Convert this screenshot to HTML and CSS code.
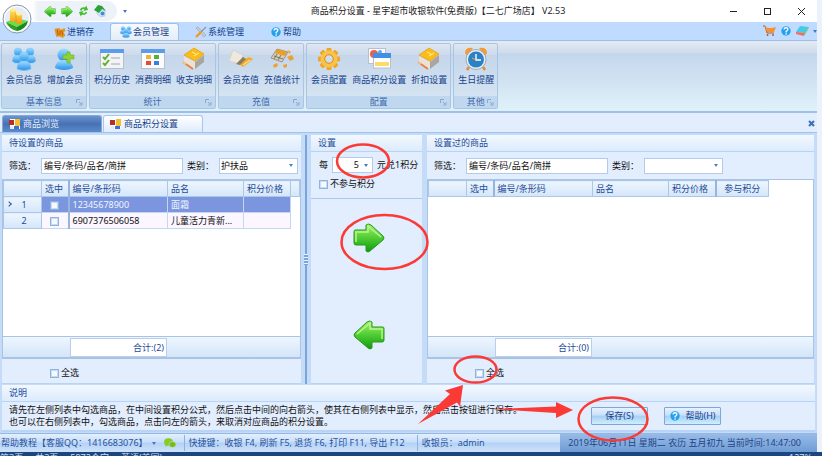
FILE: index.html
```html
<!DOCTYPE html>
<html lang="zh-CN">
<head>
    <meta charset="UTF-8">
    <meta name="viewport" content="width=device-width, initial-scale=1.0">
    <title>商品积分设置 - 星宇超市收银软件</title>
    <link rel="stylesheet" href="styles.css">
</head>
<body>
    <!-- shared icons -->
    <svg class="defs" width="0" height="0" aria-hidden="true">
        <defs>
            <linearGradient id="green" x1="0" y1="0" x2="0" y2="1"><stop offset="0" stop-color="#a5ef6e"/><stop offset="0.5" stop-color="#4fcc33"/><stop offset="1" stop-color="#109a10"/></linearGradient>
            <linearGradient id="blue" x1="0" y1="0" x2="0" y2="1"><stop offset="0" stop-color="#9fe0ff"/><stop offset="1" stop-color="#2b8fe8"/></linearGradient>
            <linearGradient id="gold" x1="0" y1="0" x2="0" y2="1"><stop offset="0" stop-color="#ffdf5c"/><stop offset="1" stop-color="#f09a10"/></linearGradient>
            <symbol id="arrow" viewBox="0 0 32 30">
                <path d="M2 7 Q1 7 1 9 V20 Q1 22 3 22 H13 V28 Q15 30 17 28 L30 17 Q32 15 30 13 L18 2 Q15 0 13 2 V7 Z" fill="url(#green)" stroke="#279a1b" stroke-width="1"/>
                <path d="M3 19 V9 H15 V3 L28 14" fill="none" stroke="#b9f58c" stroke-width="1.5"/>
            </symbol>
            <symbol id="people" viewBox="0 0 24 24">
                <g fill="url(#blue)" stroke="#7cc6fa" stroke-width="0.6">
                    <circle cx="6" cy="5" r="4"/><circle cx="18" cy="5" r="4"/>
                    <path d="M0 14 Q1 8 6 8 L10 16 H3 Z M24 14 Q23 8 18 8 L14 16 H21 Z"/>
                    <circle cx="12" cy="10" r="5"/><path d="M5 22 Q5 14 12 14 Q19 14 19 22 Q12 25 5 22 Z"/>
                </g>
            </symbol>
            <symbol id="help" viewBox="0 0 16 16">
                <circle cx="8" cy="8" r="7.5" fill="#b9e4fb"/><circle cx="8" cy="8" r="6.3" fill="#26a0ee"/>
                <path d="M5.4 6 Q5.6 3.6 8 3.6 Q10.6 3.7 10.5 6 Q10.3 7.4 8.2 8.6 V10" fill="none" stroke="#fff" stroke-width="1.8"/>
                <circle cx="8.2" cy="12" r="1.1" fill="#fff"/>
            </symbol>
            <symbol id="box" viewBox="0 0 24 24">
                <path d="M2 9 L13 15 V22 L2 16 Z" fill="#e9e3d7"/><path d="M13 15 L22 8 V15 L13 22 Z" fill="#a9a69e"/>
                <path d="M2 8 L12 1 L22 7 L13 14 Z" fill="#fbbd18" stroke="#e69a12" stroke-width="0.7"/>
                <path d="M10 5 L14 7 M12 9 L17 6" stroke="#fff0a0" stroke-width="1"/>
                <path d="M1 15 L11 22" stroke="#ef7b31" stroke-width="1.6"/><path d="M1 15 L4 17" stroke="#f7c39c" stroke-width="1.6"/>
            </symbol>
            <symbol id="form" viewBox="0 0 12 12">
                <rect x="1" y="1" width="10" height="10" fill="#fff"/>
                <path d="M0 2 H5 V7 H0 Z" fill="#b2321f"/><path d="M6 1 H11 V8 H6 Z" fill="#f6bd31"/><path d="M5 8 H10 V11 H5 Z" fill="#3a70dc"/><path d="M1 8 H4 V11 H1 Z" fill="#e4e8f3"/>
            </symbol>
            <symbol id="launch" viewBox="0 0 7 7">
                <path d="M0.5 4 V0.5 H4 M3 3 L5 5 M6 3.2 V6 H3.2" fill="none" stroke="#8ba6cf" stroke-width="1"/>
            </symbol>
        </defs>
    </svg>

    <div class="screen">
        <div class="window">
            <header class="titlebar">
                <nav class="quick" aria-label="快速访问">
                    <button aria-label="后退"><svg class="flip" width="12" height="11"><use href="#arrow"/></svg></button>
                    <button aria-label="前进"><svg width="12" height="11"><use href="#arrow"/></svg></button>
                    <button aria-label="刷新"><svg width="11" height="12" viewBox="0 0 12 12"><path d="M2 5 Q3 1 8 2 L9 0 L11 5 L6 6 L7 4 Q4 3 4 6 Z M10 7 Q9 11 4 10 L3 12 L1 7 L6 6 L5 8 Q8 9 8 7 Z" fill="#46bd31"/></svg></button>
                    <button aria-label="主页"><svg width="12" height="12" viewBox="0 0 12 12"><path d="M3 5 H11 V11 L7 12 L3 9 Z" fill="#d9e5f4" stroke="#9cb2cf" stroke-width="0.5"/><path d="M0 5 L4 0 L8 1 L12 6 L8 4 L5 8 Z" fill="#27a337"/><circle cx="8.5" cy="8.5" r="2" fill="#3e8edb"/></svg></button>
                </nav>
                <span class="quick-more caret"></span>
                <h1>商品积分设置 - 星宇超市收银软件(免费版)【二七广场店】 V2.53</h1>
                <div class="win-buttons">
                    <button aria-label="最小化"><svg width="9" height="9"><path d="M1 4.5 H8" stroke="#222"/></svg></button>
                    <button aria-label="最大化"><svg width="9" height="9"><rect x="1.5" y="1.5" width="6" height="6" fill="none" stroke="#222"/></svg></button>
                    <button aria-label="关闭"><svg width="9" height="9"><path d="M1 1 L8 8 M8 1 L1 8" stroke="#222"/></svg></button>
                </div>
            </header>
            <button class="orb" aria-label="主菜单">
                <svg width="30" height="30" viewBox="0 0 30 30">
                    <circle cx="15" cy="15" r="14" fill="#e6edf5" stroke="#8998ad" stroke-width="1"/>
                    <circle cx="15" cy="15" r="12.5" fill="none" stroke="#fff" stroke-width="1.2"/>
                    <path d="M4 18 L14 14 L26 17 L15 23 Z" fill="#6bdc4a"/><path d="M4 18 L15 23 V27 Q7 25 4 18 Z" fill="#2fa024"/><path d="M26 17 L15 23 V27 Q24 25 26 17 Z" fill="#1c8a19"/>
                    <path d="M8 6 V17 Q11 19 14 17 V6 Z M14 10 V19 Q17 21 20 19 V10 Z" fill="url(#gold)"/>
                    <path d="M14 9 V18" stroke="#d98c10" stroke-width="0.6"/>
                    <ellipse cx="11" cy="6" rx="3" ry="1.6" fill="#fff08d"/><ellipse cx="17" cy="10" rx="3" ry="1.6" fill="#fff08d"/>
                </svg>
            </button>

            <nav class="menubar">
                <a href="#" class="menu"><svg width="12" height="11" viewBox="0 0 12 12"><path d="M0 2 L5 1 L7 3 L11 1 L12 4 L10 6 L12 9 L9 12 L5 10 L2 11 L1 7 Z" fill="#eb941b"/><path d="M3 3 L4 9 M6 4 V9 M8 4 L9 9" stroke="#a65a10" stroke-width="1"/></svg>进销存</a>
                <a href="#" class="menu current"><svg width="12" height="12"><use href="#people"/></svg>会员管理</a>
                <a href="#" class="menu"><svg width="12" height="12" viewBox="0 0 12 12"><path d="M1 2 Q3 0 4 2 L11 9 L9 11 L3 4 Z" fill="#c8cdd4" stroke="#8991a0" stroke-width="0.5"/><path d="M11 1 L6 6" stroke="#9098a4" stroke-width="1.2"/><path d="M6 6 L1 11" stroke="#f09a22" stroke-width="2.4"/></svg>系统管理</a>
                <a href="#" class="menu"><svg width="12" height="12"><use href="#help"/></svg>帮助</a>
                <div class="menu-tools">
                    <button aria-label="购物车"><svg width="13" height="12" viewBox="0 0 13 12"><path d="M0 1 H2 L4 8 H11" fill="none" stroke="#c55416"/><path d="M2 2 Q7 4 13 2 L11 7 H4 Z" fill="#f39234"/><circle cx="4.5" cy="10" r="1" fill="#a5683a"/><circle cx="10" cy="10" r="1" fill="#a5683a"/></svg></button>
                    <button aria-label="帮助"><svg width="12" height="12"><use href="#help"/></svg></button>
                    <button aria-label="皮肤"><svg width="13" height="12" viewBox="0 0 13 12"><path d="M4 1 L13 2 L9 8 L0 7 Z" fill="#43cbe8"/><path d="M0 7 L9 8 L8 11 L0 9 Z" fill="#ef6d59"/><path d="M13 2 L12 5 L8 11 L9 8 Z" fill="#8fc963"/></svg></button>
                    <span class="caret"></span>
                </div>
            </nav>

            <div class="ribbon">
                <section class="group">
                    <div class="items">
                        <button><svg width="24" height="24"><use href="#people"/></svg>会员信息</button>
                        <button><svg width="24" height="24" viewBox="0 0 24 24"><circle cx="11" cy="8" r="6.5" fill="url(#blue)"/><path d="M2 21 Q3 13 11 13 Q19 13 20 21 Q11 25 2 21 Z" fill="url(#blue)"/><path d="M14 5 H17 V8 H21 V12 H17 V16 H14 V12 H10 V8 H14 Z" fill="#91d32b" stroke="#5fa81c" stroke-width="0.5"/></svg>增加会员</button>
                    </div>
                    <footer>基本信息<svg width="7" height="7"><use href="#launch"/></svg></footer>
                </section>
                <section class="group">
                    <div class="items">
                        <button><svg width="24" height="24" viewBox="0 0 24 24"><rect x="0.5" y="2.5" width="23" height="19" fill="#f3f4f6" stroke="#b6c0cd"/><rect x="0" y="2" width="24" height="4" fill="#5c9cec"/><path d="M3 10 L5 12 L9 7 M3 16 L5 18 L9 13" fill="none" stroke="#65ae2a" stroke-width="2"/><path d="M11 11 H20 M11 17 H20" stroke="#bcc1c8" stroke-width="1.5"/></svg>积分历史</button>
                        <button><svg width="24" height="24" viewBox="0 0 24 24"><rect x="0.5" y="2.5" width="23" height="19" fill="#fcfcfd" stroke="#b6c0cd"/><rect x="0" y="2" width="24" height="4" fill="#5c9cec"/><rect x="5" y="8" width="5" height="4" fill="#f0b23b"/><rect x="13" y="8" width="5" height="4" fill="#5caf35"/><rect x="5" y="14" width="5" height="4" fill="#e84a34"/><rect x="13" y="14" width="5" height="4" fill="#397ee0"/></svg>消费明细</button>
                        <button><svg width="24" height="24"><use href="#box"/></svg>收支明细</button>
                    </div>
                    <footer>统计<svg width="7" height="7"><use href="#launch"/></svg></footer>
                </section>
                <section class="group">
                    <div class="items">
                        <button><svg width="24" height="24" viewBox="0 0 24 24"><path d="M4 3 L14 8 L11 17 L0 14 Z" fill="#eee9df" stroke="#ccc7bd" stroke-width="0.6"/><path d="M9 16 L20 10 L24 12 L14 20 Z" fill="#f2ae23"/><path d="M7 17 L14 10 L17 12 L11 18 Z" fill="#8f7b60"/><path d="M14 18 L21 13" stroke="#fff0b0"/></svg>会员充值</button>
                        <button><svg width="24" height="24" viewBox="0 0 24 24"><path d="M7 2 L18 5 L12 15 L1 11 Z" fill="#d4ccbc" stroke="#96856b" stroke-width="0.8"/><path d="M7 2 L17 5 L15 9 L5 6 Z" fill="#e99e24"/><path d="M4 9 L13 12 M7 7 L4 12 M11 8 L8 13" stroke="#6f604c" stroke-width="0.8"/><path d="M17 10 L22 8 L24 12 L20 14 Z M3 18 L7 16 L8 19 L4 21 Z M13 18 L17 17 V20 L14 21 Z M18 3 L21 5 L19 7 Z" fill="#eda32b"/></svg>充值统计</button>
                    </div>
                    <footer>充值<svg width="7" height="7"><use href="#launch"/></svg></footer>
                </section>
                <section class="group">
                    <div class="items">
                        <button><svg width="24" height="24" viewBox="0 0 24 24"><g fill="#efa527"><rect x="9.5" y="1" width="5" height="22" rx="1"/><rect x="9.5" y="1" width="5" height="22" rx="1" transform="rotate(45 12 12)"/><rect x="9.5" y="1" width="5" height="22" rx="1" transform="rotate(90 12 12)"/><rect x="9.5" y="1" width="5" height="22" rx="1" transform="rotate(135 12 12)"/></g><circle cx="12" cy="12" r="8.5" fill="#fac345"/><circle cx="12" cy="12" r="4.3" fill="#cfdced" stroke="#d68d1d"/></svg>会员配置</button>
                        <button><svg width="24" height="24" viewBox="0 0 24 24"><rect x="1.5" y="1.5" width="17" height="15" fill="#fbfbfc" stroke="#b9c0cc"/><circle cx="7" cy="7" r="4" fill="#ec5f4a"/><circle cx="13" cy="5" r="2" fill="#66a7ec"/><rect x="6.5" y="7" width="17" height="14" fill="#fff" stroke="#b9c0cc"/><rect x="6" y="6" width="18" height="5" fill="#3f91e5"/><rect x="8" y="15" width="14" height="4" fill="#fbdc68"/></svg>商品积分设置</button>
                        <button><svg width="24" height="24"><use href="#box"/></svg>折扣设置</button>
                    </div>
                    <footer>配置<svg width="7" height="7"><use href="#launch"/></svg></footer>
                </section>
                <section class="group">
                    <div class="items">
                        <button><svg width="24" height="24" viewBox="0 0 24 24"><path d="M1 6 Q1 0 9 1 L3 9 Z M23 6 Q23 0 15 1 L21 9 Z" fill="#f49b35"/><path d="M5 20 L3 23 M19 20 L21 23" stroke="#e58c2a" stroke-width="2.5"/><circle cx="12" cy="12.5" r="10" fill="#e6eef4" stroke="#8b9dad" stroke-width="0.8"/><circle cx="12" cy="12.5" r="8" fill="#2b81c6"/><path d="M12 7 V13 H17" fill="none" stroke="#fff" stroke-width="1.4"/><path d="M12 13 L8 11" stroke="#f5ad47"/></svg>生日提醒</button>
                    </div>
                    <footer>其他<svg width="7" height="7"><use href="#launch"/></svg></footer>
                </section>
            </div>

            <nav class="doc-tabs">
                <a href="#" class="doc-tab"><svg width="12" height="12"><use href="#form"/></svg>商品浏览</a>
                <a href="#" class="doc-tab current"><svg width="12" height="12"><use href="#form"/></svg>商品积分设置</a>
                <button class="doc-close" aria-label="关闭"><svg width="7" height="7"><path d="M1 1 L6 6 M6 1 L1 6" stroke="#3b6fb8" stroke-width="2"/></svg></button>
            </nav>

            <main class="workspace">
                <section class="panel">
                    <h2>待设置的商品</h2>
                    <div class="filter">
                        <label for="filterLeft">筛选：</label>
                        <input type="text" id="filterLeft" value="编号/条码/品名/简拼">
                        <label for="typeLeft">类别：</label>
                        <select id="typeLeft"><option>护扶品</option></select>
                    </div>
                    <div class="grid-box">
                        <div class="grid-body">
                            <table>
                                <colgroup><col class="c-head"><col class="c-check"><col class="c-code"><col class="c-name"><col class="c-price"><col></colgroup>
                                <thead>
                                    <tr><th></th><th class="fixed">选中</th><th>编号/条形码</th><th>品名</th><th>积分价格</th><th></th></tr>
                                </thead>
                                <tbody>
                                    <tr class="selected"><th><span class="marker"></span>1</th><td class="check"><input type="checkbox" aria-label="选中 1"></td><td>12345678900</td><td>面霜</td><td></td><td class="rest"></td></tr>
                                    <tr><th>2</th><td class="check"><input type="checkbox" aria-label="选中 2"></td><td>6907376506058</td><td>儿童活力青新...</td><td></td><td class="rest"></td></tr>
                                </tbody>
                            </table>
                        </div>
                        <div class="grid-foot"><output>合计:(2)</output></div>
                    </div>
                    <div class="select-all"><label><input type="checkbox">全选</label></div>
                </section>
                <div class="splitter"><span></span></div>
                <section class="panel middle">
                    <h2>设置</h2>
                    <div class="formula">
                        <div class="formula-row">
                            <label for="yuan">每</label>
                            <span class="combo"><input type="text" id="yuan" value="5"><i class="caret"></i></span>
                            <span>元兑1积分</span>
                        </div>
                        <label><input type="checkbox">不参与积分</label>
                    </div>
                    <div class="moves">
                        <button aria-label="添加"><svg width="32" height="30"><use href="#arrow"/></svg></button>
                        <button aria-label="移除"><svg class="flip" width="32" height="30"><use href="#arrow"/></svg></button>
                    </div>
                </section>
                <section class="panel">
                    <h2>设置过的商品</h2>
                    <div class="filter">
                        <label for="filterRight">筛选：</label>
                        <input type="text" id="filterRight" value="编号/条码/品名/简拼">
                        <label for="typeRight">类别：</label>
                        <select id="typeRight"><option></option></select>
                    </div>
                    <div class="grid-box">
                        <div class="grid-body">
                            <table>
                                <colgroup><col class="c-head"><col class="c-check"><col class="c-code"><col class="c-name"><col class="c-price"><col class="c-join"><col></colgroup>
                                <thead>
                                    <tr><th></th><th class="fixed">选中</th><th>编号/条形码</th><th>品名</th><th class="fixed">积分价格</th><th class="center">参与积分</th><td class="rest"></td></tr>
                                </thead>
                            </table>
                        </div>
                        <div class="grid-foot"><output>合计:(0)</output></div>
                    </div>
                    <div class="select-all"><label><input type="checkbox">全选</label></div>
                </section>
            </main>

            <section class="notes">
                <h2>说明</h2>
                <div class="notes-body">
                    <p>请先在左侧列表中勾选商品，在中间设置积分公式，然后点击中间的向右箭头，使其在右侧列表中显示，然后点击按钮进行保存。<br>也可以在右侧列表中，勾选商品，点击向左的箭头，来取消对应商品的积分设置。</p>
                    <div class="actions">
                        <button>保存(S)</button>
                        <button><svg width="12" height="12"><use href="#help"/></svg>帮助(H)</button>
                    </div>
                </div>
            </section>

            <footer class="status">
                <a href="#">帮助教程【客服QQ：1416683076】<i class="caret"></i></a>
                <svg class="wechat" width="12" height="10" viewBox="0 0 12 10"><ellipse cx="4.5" cy="4" rx="4.5" ry="3.7" fill="#86cc22"/><ellipse cx="8.5" cy="6.5" rx="3.5" ry="3" fill="#75bb1a" stroke="#dcebfa" stroke-width="0.5"/><path d="M1 9 L2 6 L4 7 Z" fill="#86cc22"/></svg>
                <span class="keys">快捷键：收银 F4, 刷新 F5, 退货 F6, 打印 F11, 导出 F12</span>
                <span class="user">收银员：admin</span>
                <time>2019年06月11日 星期二 农历 五月初九 当前时间:14:47:00</time>
            </footer>
        </div>
        <div class="desktop"></div>
        <div class="taskbar"><span>第3页</span><span>共3页</span><span>5972个字</span><span>英语(美国)</span><span class="zoom">127%</span></div>
    </div>

    <!-- tutorial marks over the window -->
    <svg class="marks" width="822" height="456" viewBox="0 0 822 456" aria-hidden="true">
        <g fill="none" stroke="#fb3a36" stroke-width="2.5">
            <ellipse cx="363" cy="161" rx="26" ry="16.5"/>
            <ellipse cx="384.5" cy="242" rx="43" ry="27"/>
            <ellipse cx="475.5" cy="369.5" rx="21" ry="13"/>
            <ellipse cx="613" cy="419" rx="34.5" ry="21.5"/>
        </g>
        <path d="M463 385 L445 390.5 L450 394 L418 424 L457 402.5 L460 406.5 Z" fill="#fb3a36"/>
        <path d="M492 409 L556 406.5 V402 L573 410 L556 418 V413 Z" fill="#fb3a36"/>
    </svg>
</body>
</html>
```
FILE: styles.css
```css
* {
    box-sizing: border-box;
}
body {
    margin: 0;
    font-family: "Noto Sans", "Noto Sans CJK SC", sans-serif;
    font-size: 9px;
    line-height: 12px;
    color: #111;
}
h1, h2, p {
    margin: 0;
    font-size: 9px;
    font-weight: normal;
}
a {
    color: inherit;
    text-decoration: none;
}
button, input, select {
    font: inherit;
    color: inherit;
    margin: 0;
    padding: 0;
    border: none;
    border-radius: 0;
    background: none;
    outline: none;
}
svg {
    flex: none;
    display: block;
}
.defs {
    position: absolute;
}
.flip {
    transform: scaleX(-1);
}
.caret {
    flex: none;
    border: 2px solid transparent;
    border-top: 3px solid #4577c4;
    border-bottom: none;
}
.screen {
    display: grid;
    grid-template-columns: minmax(0, 1fr) 5px;
    grid-template-rows: minmax(0, 1fr) 4px;
    height: 100vh;
}
.window {
    position: relative;
    display: flex;
    flex-direction: column;
    background: #c5dcf9;
    color: #15428b;
}
.desktop {
    background: #ecf2fb;
}
.taskbar {
    grid-column: 1 / -1;
    display: flex;
    gap: 12px;
    overflow: hidden;
    background: #1c4680;
    color: #d4dfef;
}
.taskbar .zoom {
    margin-left: auto;
    margin-right: 10px;
}

/* title bar */
.titlebar {
    display: flex;
    align-items: center;
    height: 22px;
    background: #fff;
    color: #222;
}
.quick {
    display: flex;
    align-items: center;
    gap: 5px;
    width: 117px;
    height: 20px;
    padding-left: 44px;
    border-radius: 0 10px 10px 0;
    background: linear-gradient(90deg, #fff 28%, #edf2f8 32%);
}
.quick-more {
    margin-left: 6px;
}
.titlebar h1 {
    flex: 1;
    padding-left: 20px;
    text-align: center;
    white-space: nowrap;
}
.win-buttons {
    display: flex;
    gap: 25px;
    padding-right: 11px;
}
.orb {
    position: absolute;
    left: 2px;
    top: 4px;
    cursor: pointer;
}

/* menu */
.menubar {
    display: flex;
    align-items: flex-end;
    height: 18px;
    padding-left: 44px;
    background: #bfdbff;
}
.menu {
    display: flex;
    align-items: center;
    gap: 1px;
    height: 17px;
    padding: 0 9px;
    margin-right: 6px;
    border: 1px solid transparent;
    border-bottom: none;
    white-space: nowrap;
}
.menu.current {
    background: linear-gradient(#f5fafe, #e4ecf6);
    border-color: #9fc0ea;
    border-radius: 3px 3px 0 0;
}
.menu-tools {
    display: flex;
    align-items: center;
    align-self: center;
    gap: 4px;
    margin-left: auto;
}

/* ribbon */
.ribbon {
    display: flex;
    gap: 2px;
    height: 73px;
    padding: 2px 1px;
    border: solid #9fc0e4;
    border-width: 1px 0 2px;
    background: linear-gradient(#e3eaf4, #cfdcec 17%, #c4d6ec 18%, #d2e4f2 60%, #dff1f8);
}
.group {
    display: flex;
    flex-direction: column;
    border: 1px solid #a9c5e4;
    border-radius: 2px;
    background: linear-gradient(#dfe7f2, #ccdaec 17%, #c5d6eb 18%, #d9e8f4);
}
.items {
    display: flex;
    flex: 1;
    padding: 3px 1px 0;
}
.items button {
    display: flex;
    flex-direction: column;
    align-items: center;
    gap: 3px;
    padding: 0 2px 0 3px;
    white-space: nowrap;
    cursor: pointer;
}
.group footer {
    display: flex;
    align-items: center;
    justify-content: center;
    height: 12px;
    padding: 0 3px 0 10px;
    background: #c0d8ef;
    color: #3e6aaa;
}
.group footer svg {
    margin-left: auto;
}
.group footer::before {
    content: "";
    margin-left: auto;
}

/* document tabs */
.doc-tabs {
    display: flex;
    align-items: flex-end;
    height: 20px;
    padding-left: 2px;
    background: #e2edfe;
    border-bottom: 1px solid #9fc2ee;
}
.doc-tab {
    display: flex;
    align-items: center;
    gap: 2px;
    width: 100px;
    height: 17px;
    padding-left: 6px;
    border: 1px solid #86a9da;
    border-bottom: none;
    border-radius: 3px 3px 0 0;
    background: linear-gradient(#6b93cf, #4672b5 50%, #5d8acb);
    color: #e7f0ff;
    margin-right: 1px;
}
.doc-tab.current {
    background: linear-gradient(#fff, #dfecfd);
    border-color: #a9c7ee;
    color: #15428b;
}
.doc-close {
    margin-left: auto;
    padding: 0 2px 5px 0;
}

/* panels */
.workspace {
    flex: 1;
    display: grid;
    grid-template-columns: minmax(0, 304fr) 5px minmax(0, 116fr) minmax(0, 392fr);
    padding-top: 2px;
    min-height: 0;
}
.panel {
    display: flex;
    flex-direction: column;
    margin-left: 2px;
    background: #e2edfe;
    border-right: 3px solid #c5dcf9;
}
.panel h2, .notes h2 {
    height: 17px;
    padding-left: 7px;
    line-height: 16px;
    border-bottom: 1px solid #b7d3f5;
    background: linear-gradient(#f2f8ff, #dcebfd);
    color: #1d4c98;
}
.filter {
    display: flex;
    align-items: center;
    gap: 4px;
    height: 27px;
    padding: 0 2px 0 7px;
    color: #111;
}
.filter label {
    flex: none;
    width: 28px;
    white-space: nowrap;
}
.filter input, .filter select {
    height: 16px;
    border: 1px solid #b3cbeb;
    background-color: #fff;
}
.filter input {
    flex: 0 1 142px;
    min-width: 0;
    padding-left: 2px;
}
.filter select {
    width: 79px;
    padding-left: 1px;
    appearance: none;
    background: #fff url("data:image/svg+xml,%3Csvg xmlns='http://www.w3.org/2000/svg' width='4' height='3'%3E%3Cpath d='M0 0H4L2 3Z' fill='%234d80ca'/%3E%3C/svg%3E") right 4px center no-repeat;
}
.grid-box {
    flex: 1;
    display: flex;
    flex-direction: column;
    border: 1px solid #a9c3e4;
    border-bottom-width: 2px;
    background: #fff;
}
.grid-body {
    flex: 1;
    overflow: hidden;
}
table {
    width: 100%;
    table-layout: fixed;
    border-collapse: collapse;
}
.c-head { width: 38px; }
.c-check { width: 27px; }
.c-code { width: 99px; }
.c-name { width: 76px; }
.c-price { width: 47px; }
.c-join { width: 53px; }
th, td {
    height: 16px;
    padding: 0 0 0 3px;
    border: 1px solid #c3d7ef;
    overflow: hidden;
    white-space: nowrap;
    text-align: left;
    font-weight: normal;
    line-height: 14px;
}
th {
    border-color: #a9c7e8;
    background: linear-gradient(#edf5fe, #d4e6fa);
    color: #1d4c98;
}
th.fixed, td.check {
    border-right: 2px solid #96b5dc;
}
th.center {
    padding: 0;
    text-align: center;
}
tbody th {
    text-align: center;
    position: relative;
}
td {
    background: #fbf6ff;
    color: #111;
}
.selected td {
    background: #7b96df;
    color: #f1f5ff;
}
td.rest, .selected td.rest {
    background: #fff;
    border: none;
}
td.check {
    padding: 0;
    text-align: center;
}
.marker {
    position: absolute;
    left: 3px;
    top: 5px;
    width: 4px;
    height: 4px;
    border: solid #2a5aa0;
    border-width: 1px 1px 0 0;
    transform: rotate(45deg);
}
input[type="checkbox"] {
    appearance: none;
    flex: none;
    width: 9px;
    height: 9px;
    border: 1px solid #8fb3df;
    background: #f6f9fd;
    box-shadow: inset 0 0 0 1px #c7daf2;
    vertical-align: middle;
}
.grid-foot {
    height: 21px;
    padding: 1px 0 1px 67px;
    border-top: 1px solid #a9c3e4;
    background: linear-gradient(#eef6ff, #d3e5f9);
}
.grid-foot output {
    display: block;
    width: 97px;
    padding-right: 2px;
    border: 1px solid #b9cfec;
    background: #fff;
    line-height: 17px;
    text-align: right;
    color: #1d4c98;
}
.select-all {
    height: 25px;
    padding: 8px 0 0 48px;
    border-bottom: 1px solid #b7d3f5;
    color: #111;
}
.select-all label, .formula > label {
    display: flex;
    align-items: center;
    gap: 2px;
}
.splitter {
    display: flex;
    align-items: center;
    background: linear-gradient(90deg, #c5dcf9 1px, #7ba3dc 1px, #7ba3dc 3px, #c5dcf9 3px);
}
.splitter span {
    width: 4px;
    height: 11px;
    background: repeating-linear-gradient(#e9f3ff 0 1px, #7ba3dc 1px 3px);
}
.formula {
    height: 47px;
    padding: 5px 0 0 8px;
    border-bottom: 1px solid #a9c9f1;
    color: #111;
}
.formula-row {
    display: flex;
    align-items: center;
    gap: 4px;
    margin-bottom: 5px;
    white-space: nowrap;
}
.combo {
    display: flex;
    align-items: center;
    width: 41px;
    height: 16px;
    padding-right: 4px;
    border: 1px solid #b3cbeb;
    background: #fff;
}
.combo input {
    flex: 1;
    min-width: 0;
    padding-right: 5px;
    text-align: right;
}
.moves {
    display: flex;
    flex: 1;
    flex-direction: column;
    align-items: center;
    justify-content: center;
    gap: 67px;
    padding: 0 0 10px 4px;
    border-bottom: 1px solid #b7d3f5;
}
.moves button {
    cursor: pointer;
}

/* notes */
.notes {
    margin: 1px 2px 0;
    border-bottom: 2px solid #b7d3f5;
    background: #e2edfe;
}
.notes-body {
    display: flex;
    align-items: flex-start;
    height: 28px;
    padding-left: 7px;
    color: #111;
}
.notes p {
    padding-top: 2px;
    line-height: 12px;
    white-space: nowrap;
}
.actions {
    display: flex;
    gap: 16px;
    margin: 5px 94px 0 auto;
}
.actions button {
    display: flex;
    align-items: center;
    justify-content: center;
    gap: 4px;
    width: 57px;
    height: 18px;
    border: 1px solid #7fa6d9;
    border-radius: 1px;
    background: linear-gradient(#e6f2ff, #c9e0fa 45%, #a9cdf3 50%, #cdefff);
    color: #15428b;
    cursor: pointer;
}

/* status bar */
.status {
    display: flex;
    align-items: center;
    height: 19px;
    margin-top: 1px;
    border-top: 1px solid #94b8e6;
    background: linear-gradient(#e3effd, #c8defa 45%, #b3d1f6 50%, #cfe3fb);
    white-space: nowrap;
    color: #27529b;
}
.status a {
    display: flex;
    align-items: center;
    gap: 4px;
    padding-left: 1px;
}
.wechat {
    margin: 0 8px;
}
.keys, .user {
    padding: 2px 4px;
    border-left: 1px solid #8db1e0;
}
.keys {
    padding-right: 12px;
}
.status time {
    align-self: stretch;
    display: flex;
    align-items: center;
    margin-left: auto;
    padding: 0 16px 0 8px;
    background: linear-gradient(#98bbe7, #6f9bd4);
    color: #1e4585;
}

.marks {
    position: absolute;
    left: 0;
    top: 0;
    pointer-events: none;
}
```
